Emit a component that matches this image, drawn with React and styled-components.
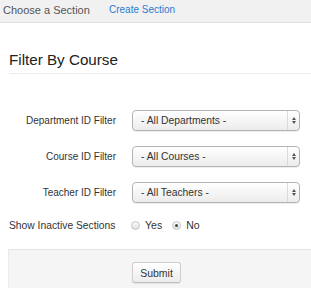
import styled, { createGlobalStyle } from "styled-components";

const GlobalStyle = createGlobalStyle`
  html, body {
    margin: 0;
    padding: 0;
    background: #fff;
  }
  body {
    font-family: "Liberation Sans", Arial, sans-serif;
    color: #333;
  }
`;

const Page = styled.div`
  width: 311px;
  height: 288px;
  overflow: hidden;
`;

const TopBar = styled.div`
  height: 23px;
  box-sizing: border-box;
  background: #f1f1f1;
  border-bottom: 1px solid #dedede;
  display: flex;
  align-items: flex-start;
  padding: 3px 0 0 3px;
`;

const Tab = styled.a`
  font-size: ${(p) => (p.$active ? "10px" : "11px")};
  line-height: 14px;
  color: ${(p) => (p.$active ? "#2b7bd3" : "#555")};
  text-decoration: none;
  width: ${(p) => (p.$active ? "auto" : "106px")};
`;

const Content = styled.div`
  padding-left: 9px;
`;

const Heading = styled.h2`
  margin: 27px 0 0;
  font-size: 15.2px;
  font-weight: normal;
  line-height: 20px;
  color: #222;
  padding-bottom: 3px;
  border-bottom: 1px solid #ebebeb;
`;

const Form = styled.form`
  margin: 35px 0 0;
  display: flex;
  flex-direction: column;
`;

const Row = styled.div`
  display: grid;
  grid-template-columns: 107px 168px;
  column-gap: 16px;
  align-items: center;
  height: 22px;
  margin-bottom: ${(p) => p.$gap || 14}px;
`;

const Label = styled.label`
  font-size: ${(p) => (p.$left ? "10.3px" : "10px")};
  color: #333;
  text-align: ${(p) => (p.$left ? "left" : "right")};
  white-space: nowrap;
`;

const SelectWrap = styled.div`
  position: relative;
  height: 21px;
`;

const Select = styled.select`
  appearance: none;
  -webkit-appearance: none;
  width: 100%;
  height: 21px;
  box-sizing: border-box;
  margin: 0;
  padding: 0 16px 0 8px;
  font-family: "Liberation Sans", Arial, sans-serif;
  font-size: 10.3px;
  color: #333;
  border: 1px solid #b4b4b4;
  border-radius: 4px;
  background: linear-gradient(#ffffff, #ececec);
  box-shadow: 0 1px 1px rgba(0, 0, 0, 0.08);
  outline: none;
`;

const Arrows = styled.span`
  position: absolute;
  top: 1px;
  right: 1px;
  bottom: 1px;
  width: 11px;
  border-left: 1px solid #dadada;
  display: flex;
  flex-direction: column;
  align-items: center;
  justify-content: center;
  gap: 1px;
  pointer-events: none;
`;

const Tri = styled.span`
  width: 0;
  height: 0;
  border-left: 2.5px solid transparent;
  border-right: 2.5px solid transparent;
  ${(p) =>
    p.$up
      ? "border-bottom: 3px solid #555;"
      : "border-top: 3px solid #555;"}
`;

const Radios = styled.div`
  display: flex;
  align-items: center;
  margin-left: -1px;
`;

const RadioOption = styled.label`
  display: flex;
  align-items: center;
  font-size: 10.5px;
  color: #333;
  margin-right: 10px;
`;

const Radio = styled.input.attrs({ type: "radio" })`
  appearance: none;
  -webkit-appearance: none;
  width: 9px;
  height: 9px;
  margin: 0 5px 0 0;
  border-radius: 50%;
  border: 1px solid #c4c4c4;
  background: linear-gradient(#fafafa, #e2e2e2);
  box-sizing: border-box;
  position: relative;
  &:checked::after {
    content: "";
    position: absolute;
    left: 2px;
    top: 2px;
    width: 3px;
    height: 3px;
    border-radius: 50%;
    background: #444;
  }
`;

const Footer = styled.div`
  margin: 0 0 0 -1px;
  height: 40px;
  background: #f5f5f5;
  border-top: 1px solid #e4e4e4;
  border-left: 1px solid #ebebeb;
  padding: 12px 0 0 123px;
  box-sizing: border-box;
`;

const Button = styled.button`
  width: 49px;
  height: 21px;
  padding: 0;
  font-family: "Liberation Sans", Arial, sans-serif;
  font-size: 10.5px;
  color: #333;
  border: 1px solid #cfcfcf;
  border-bottom-color: #bdbdbd;
  border-radius: 3px;
  background: linear-gradient(#ffffff, #ececec);
  box-shadow: 0 1px 1px rgba(0, 0, 0, 0.08);
`;

const filters = [
  { id: "dept", label: "Department ID Filter", option: "- All Departments -" },
  { id: "course", label: "Course ID Filter", option: "- All Courses -" },
  { id: "teacher", label: "Teacher ID Filter", option: "- All Teachers -" },
];

const App = () => {
  return (
    <Page>
      <GlobalStyle />
      <TopBar>
        <Tab>Choose a Section</Tab>
        <Tab $active href="#">
          Create Section
        </Tab>
      </TopBar>
      <Content>
        <Heading>Filter By Course</Heading>
        <Form onSubmit={(e) => e.preventDefault()}>
          {filters.map((f, i) => (
            <Row key={f.id} $gap={i === filters.length - 1 ? 11 : 14}>
              <Label htmlFor={f.id}>{f.label}</Label>
              <SelectWrap>
                <Select id={f.id} defaultValue="">
                  <option value="">{f.option}</option>
                </Select>
                <Arrows>
                  <Tri $up />
                  <Tri />
                </Arrows>
              </SelectWrap>
            </Row>
          ))}
          <Row $gap={13}>
            <Label $left>Show Inactive Sections</Label>
            <Radios>
              <RadioOption>
                <Radio name="inactive" value="yes" />
                Yes
              </RadioOption>
              <RadioOption>
                <Radio name="inactive" value="no" defaultChecked />
                No
              </RadioOption>
            </Radios>
          </Row>
          <Footer>
            <Button type="submit">Submit</Button>
          </Footer>
        </Form>
      </Content>
    </Page>
  );
};

export default App;
